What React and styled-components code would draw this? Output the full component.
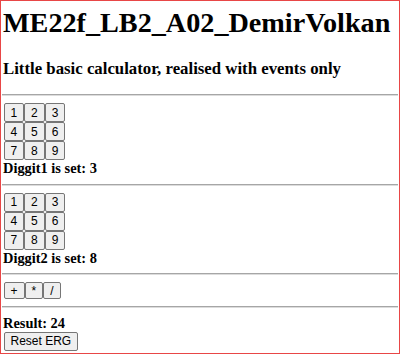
import { useState } from 'react';
import styled, { createGlobalStyle } from 'styled-components';

const GlobalStyle = createGlobalStyle`
    html, body {
        margin: 0;
        padding: 0;
        background: #ffffff;
    }
    body {
        font-family: "Liberation Serif", "Times New Roman", serif;
        color: #000000;
    }
`

const DIGITS = [1, 2, 3, 4, 5, 6, 7, 8, 9];
const OPS = ['+', '*', '/'];

function calc(a, b, op) {
    if (op === '+') return a + b;
    if (op === '*') return a * b;
    if (op === '/') return b === 0 ? 'NaN' : a / b;
    return '';
}

function Keypad({ onPick }) {
    return (
        <Grid>
            {DIGITS.map((d) => (
                <KeyButton key={d} onClick={() => onPick(d)}>{d}</KeyButton>
            ))}
        </Grid>
    )
}

export default function App() {
    const [digit1, setDigit1] = useState(3);
    const [digit2, setDigit2] = useState(8);
    const [result, setResult] = useState(24);

    return (
        <>
            <GlobalStyle />
            <Page>
                <Title>ME22f_LB2_A02_DemirVolkan</Title>
                <Subtitle>Little basic calculator, realised with events only</Subtitle>
                <Divider />
                <Keypad onPick={setDigit1} />
                <Label>Diggit1 is set: {digit1}</Label>
                <Divider />
                <Keypad onPick={setDigit2} />
                <Label>Diggit2 is set: {digit2}</Label>
                <Divider />
                <OpRow>
                    {OPS.map((op) => (
                        <OpButton key={op} onClick={() => setResult(calc(digit1, digit2, op))}>{op}</OpButton>
                    ))}
                </OpRow>
                <Divider />
                <Label>Result: {result}</Label>
                <OpButton $tall onClick={() => setResult('')}>Reset ERG</OpButton>
            </Page>
        </>
    )
}

const Page = styled.div`
    box-sizing: border-box;
    height: 354px;
    border: 1px solid #e84646;
    padding: 0 1px;
    display: flex;
    flex-direction: column;
    align-items: flex-start;
    overflow: hidden;
`

const Title = styled.h1`
    margin: 5.5px 0 0 1px;
    font-size: 28.2px;
    font-weight: bold;
    line-height: normal;
    white-space: nowrap;
`

const Subtitle = styled.h2`
    margin: 20.8px 0 8px 1px;
    font-size: 16.8px;
    font-weight: bold;
    line-height: normal;
`

const Divider = styled.hr`
    align-self: stretch;
    margin: 7px 0;
    height: 0;
    border: none;
    border-top: 1px solid #a6a6a6;
    border-bottom: 1px solid #dcdcdc;
`

const Grid = styled.div`
    display: grid;
    grid-template-columns: repeat(3, 20.6px);
    grid-auto-rows: 19px;
    margin-left: 1.5px;
`

const ButtonBase = styled.button`
    box-sizing: border-box;
    margin: 0;
    font-family: "Liberation Sans", Arial, sans-serif;
    font-size: 12px;
    color: #000000;
    background: #efefef;
    border: 1px solid #767676;
    border-radius: 2px;
    cursor: pointer;
    display: flex;
    align-items: center;
    justify-content: center;
    &:hover {
        background: #e5e5e5;
    }
`

const KeyButton = styled(ButtonBase)`
    width: 100%;
    height: 100%;
    padding: 0;
`

const OpRow = styled.div`
    display: flex;
    margin-left: 1.5px;
`

const OpButton = styled(ButtonBase)`
    height: ${(p) => (p.$tall ? '19px' : '17px')};
    padding: 0 6px;
    margin-left: ${(p) => (p.$tall ? '1.5px' : '0')};
`

const Label = styled.div`
    margin-left: 1px;
    font-size: 14.4px;
    font-weight: bold;
    line-height: 16.5px;
`
